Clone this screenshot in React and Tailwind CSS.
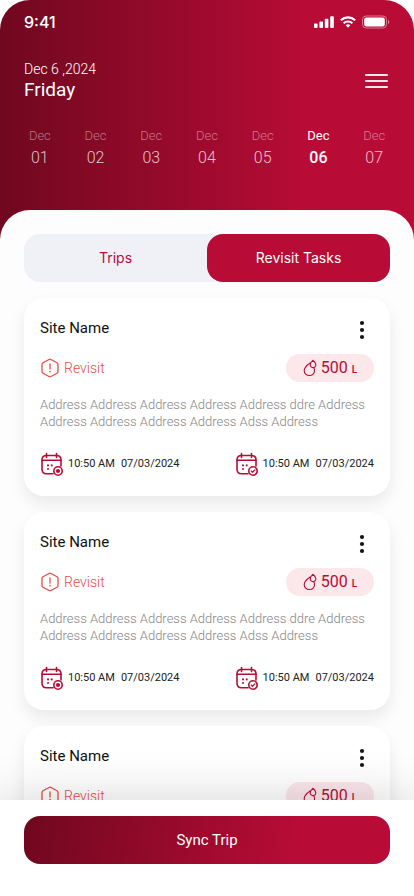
import React from "react";

const days = ["01", "02", "03", "04", "05", "06", "07"];
const activeDay = "06";

const tasks = [1, 2, 3].map((id) => ({
  id,
  name: "Site Name",
  status: "Revisit",
  volume: "500",
  address:
    "Address Address Address Address Address ddre Address Address Address Address Address Adss Address",
  start: { time: "10:50 AM", date: "07/03/2024" },
  end: { time: "10:50 AM", date: "07/03/2024" },
}));

function StatusIcons() {
  return (
    <svg width="76" height="14" viewBox="0 0 76 14" fill="white" aria-hidden="true">
      <rect x="0" y="8.5" width="3.6" height="4.5" rx="0.9" />
      <rect x="5.4" y="6.5" width="3.6" height="6.5" rx="0.9" />
      <rect x="10.8" y="3.8" width="3.6" height="9.2" rx="0.9" />
      <rect x="16.2" y="1.2" width="3.6" height="11.8" rx="0.9" />
      <g fill="none" stroke="white" strokeWidth="2.1">
        <path d="M26.8 5.2a10.6 10.6 0 0 1 14.4 0" />
        <path d="M29.6 8.2a6.4 6.4 0 0 1 8.8 0" />
      </g>
      <path d="M31.7 10.2a3.5 3.5 0 0 1 4.6 0L34 12.7z" />
      <rect x="48.5" y="1" width="24" height="12" rx="3.6" fill="none" stroke="white" strokeOpacity="0.45" />
      <rect x="50.2" y="2.6" width="20.6" height="8.8" rx="2.2" />
      <path d="M74 5v4a2.2 2.2 0 0 0 0-4z" opacity="0.5" />
    </svg>
  );
}

function AlertIcon() {
  return (
    <svg width="20" height="20" viewBox="0 0 20 20" fill="none" stroke="#e74c46" strokeWidth="1.3" strokeLinecap="round" strokeLinejoin="round" aria-hidden="true">
      <path d="M9 1.5a2 2 0 0 1 2 0l6 3.3a2 2 0 0 1 1 1.8v6.8a2 2 0 0 1-1 1.8l-6 3.3a2 2 0 0 1-2 0l-6-3.3a2 2 0 0 1-1-1.8V6.600a2 2 0 0 1 1-1.800z" />
      <path d="M10 6v5" />
      <path d="M10 13.600v.1" strokeWidth="1.6" />
    </svg>
  );
}

function DropsIcon() {
  return (
    <svg width="14" height="18" viewBox="0 0 14 18" fill="none" stroke="#b80c36" strokeWidth="1.1" strokeLinecap="round" strokeLinejoin="round" aria-hidden="true">
      <path d="M7.200 4C4.800 5.600 1.300 8 1.200 11.400a5 5 0 0 0 5.100 5.100c3.400 0 5.700-2.700 5.200-5.600-.1-.8-.4-1.500-.8-2.200" />
      <path d="M9.800 1.300C8.300 2.600 7.100 4.300 7.200 6a2.700 2.700 0 0 0 2.900 2.600c1.900 0 2.900-1.400 2.700-3-.2-1.700-1.500-3.200-3-4.300z" />
    </svg>
  );
}

function CalendarIcon({ variant }) {
  return (
    <svg width="24" height="24" viewBox="0 0 24 24" fill="none" stroke="#b80c36" strokeWidth="1.600" strokeLinecap="round" strokeLinejoin="round" aria-hidden="true">
      <path d="M13 21.800H6.500c-3 0-4.500-1.600-4.500-4.500V8C2 5 3.500 3.500 6.500 3.500h10c3 0 4.500 1.500 4.500 4.500v6" />
      <path d="M6.500 1.500v4M16.500 1.500v4M2 8.300h19" />
      <path d="M8 13.300v.1M11.700 13.300v.1M8 17v.1" strokeWidth="2" />
      <circle cx="18" cy="19" r="4.200" fill="white" />
      {variant === "start" ? (
        <circle cx="18" cy="19" r="1.300" fill="#b80c36" />
      ) : (
        <path d="M16.200 19.100l1.300 1.200 2.300-2.400" strokeWidth="1.300" />
      )}
    </svg>
  );
}

function Schedule({ variant, time, date }) {
  return (
    <div className="flex items-center gap-1">
      <CalendarIcon variant={variant} />
      <p className="flex gap-1.5 text-[11px] leading-4 text-[#222222]">
        <span>{time}</span>
        <span>{date}</span>
      </p>
    </div>
  );
}

function TaskCard({ task }) {
  return (
    <article className="rounded-[20px] bg-white px-4 pt-4 pb-5 shadow-[0_8px_16px_rgba(0,0,0,0.08)]">
      <div className="flex items-center justify-between">
        <h2 className="text-[15px] leading-7 text-[#111111]">{task.name}</h2>
        <button type="button" aria-label="Task options" className="flex h-7 w-6 items-end justify-center">
          <svg width="6" height="24" viewBox="0 0 6 24" fill="#141414" aria-hidden="true">
            <circle cx="3" cy="5" r="2.100" />
            <circle cx="3" cy="12" r="2.100" />
            <circle cx="3" cy="19" r="2.100" />
          </svg>
        </button>
      </div>
      <div className="mt-3 flex items-center justify-between">
        <p className="flex items-center gap-1 text-sm font-light text-[#e74c46]">
          <AlertIcon />
          {task.status}
        </p>
        <p className="flex h-7 w-[88px] items-center justify-center gap-1 rounded-full bg-[#fce7eb] text-[#b80c36]">
          <DropsIcon />
          <span className="flex items-baseline gap-1 text-base">
            {task.volume}
            <span className="text-[10px] font-medium">L</span>
          </span>
        </p>
      </div>
      <p className="mt-[14px] text-[13px] leading-[17px] font-light text-[#858585]">{task.address}</p>
      <div className="mt-[22px] flex items-center justify-between">
        <Schedule variant="start" time={task.start.time} date={task.start.date} />
        <Schedule variant="end" time={task.end.time} date={task.end.date} />
      </div>
    </article>
  );
}

export default function App() {
  return (
    <div className="h-screen bg-white font-['Roboto','Liberation_Sans',sans-serif]">
      <div className="flex h-full flex-col overflow-hidden rounded-t-[30px] bg-linear-to-r from-[#70081f] via-[#a00a2e] via-50% to-[#b80c36] to-75%">
        <header className="flex h-[210px] shrink-0 flex-col text-white">
          <div className="flex h-11 items-center justify-between px-6">
            <span className="font-['Inter',sans-serif] text-base font-medium">9:41</span>
            <StatusIcons />
          </div>
          <div className="mt-4 flex items-center justify-between px-6">
            <div>
              <p className="text-sm leading-[18px] font-light">Dec 6 ,2024</p>
              <h1 className="text-[19px] leading-6">Friday</h1>
            </div>
            <button type="button" aria-label="Menu" className="flex h-8 w-7 flex-col items-center justify-center gap-1">
              <span className="h-[2px] w-[23px] rounded-full bg-white/90" />
              <span className="h-[2px] w-[23px] rounded-full bg-white/90" />
              <span className="h-[2px] w-[23px] rounded-full bg-white/90" />
            </button>
          </div>
          <nav aria-label="Days" className="mt-6 grid grid-cols-7 px-3">
            {days.map((day) => {
              const active = day === activeDay;
              return (
                <button key={day} type="button" aria-pressed={active} className="flex flex-col items-center">
                  <span className={active ? "text-[13px] leading-5" : "text-[13px] leading-5 font-light text-white/45"}>Dec</span>
                  <span className={active ? "text-base leading-6 font-medium" : "text-base leading-6 font-light text-white/75"}>{day}</span>
                </button>
              );
            })}
          </nav>
        </header>

        <main className="flex min-h-0 flex-1 flex-col rounded-t-[30px] bg-[#fdfdfd] pt-6">
          <div role="tablist" className="mx-6 grid h-12 shrink-0 grid-cols-2 rounded-2xl bg-[#f0f1f6] font-['Inter',sans-serif] text-sm">
            <button type="button" role="tab" aria-selected="false" className="rounded-2xl text-[#b80c36]">Trips</button>
            <button type="button" role="tab" aria-selected="true" className="rounded-2xl bg-[#b80c36] text-white">Revisit Tasks</button>
          </div>
          <div className="flex min-h-0 flex-1 flex-col gap-4 overflow-y-auto px-6 pt-4 pb-6 [scrollbar-width:none]">
            {tasks.map((task) => (
              <TaskCard key={task.id} task={task} />
            ))}
          </div>
        </main>

        <footer className="relative shrink-0 bg-white px-6 pt-4 pb-8 shadow-[0_0_50px_rgba(0,0,0,0.18)]">
          <button type="button" className="h-12 w-full rounded-2xl bg-linear-[98deg] from-[#70081f] via-[#a00a2e] via-50% to-[#b80c36] to-75% text-[15px] text-white">
            Sync Trip
          </button>
        </footer>
      </div>
    </div>
  );
}
